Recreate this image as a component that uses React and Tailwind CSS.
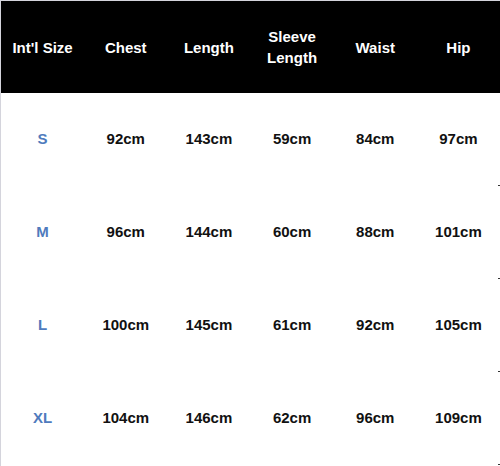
const headers = ["Int'l Size", 'Chest', 'Length', 'Sleeve Length', 'Waist', 'Hip'];

const rows = [
  { size: 'S', values: ['92cm', '143cm', '59cm', '84cm', '97cm'] },
  { size: 'M', values: ['96cm', '144cm', '60cm', '88cm', '101cm'] },
  { size: 'L', values: ['100cm', '145cm', '61cm', '92cm', '105cm'] },
  { size: 'XL', values: ['104cm', '146cm', '62cm', '96cm', '109cm'] },
];

export default function App() {
  return (
    <div className="w-[500px] h-[466px] bg-white border-t border-l border-[#d4d4dc] font-['Liberation_Sans',Arial,sans-serif] font-bold text-[15px]">
      {/* Header */}
      <div className="grid grid-cols-6 h-[92px] bg-black text-white">
        {headers.map((h, i) => (
          <div key={i} className="flex items-center justify-center text-center leading-[21px]">
            {h}
          </div>
        ))}
      </div>

      {/* Body */}
      {rows.map((row, i) => (
        <div key={i} className="grid grid-cols-6 h-[93px] relative">
          <div className="flex items-center justify-center text-[#4f7bbd]">{row.size}</div>
          {row.values.map((v, j) => (
            <div key={j} className="flex items-center justify-center text-[#111]">
              {v}
            </div>
          ))}
          <span className="absolute right-0 bottom-0 w-[2px] h-[1px] bg-[#333]"></span>
        </div>
      ))}
    </div>
  );
}
